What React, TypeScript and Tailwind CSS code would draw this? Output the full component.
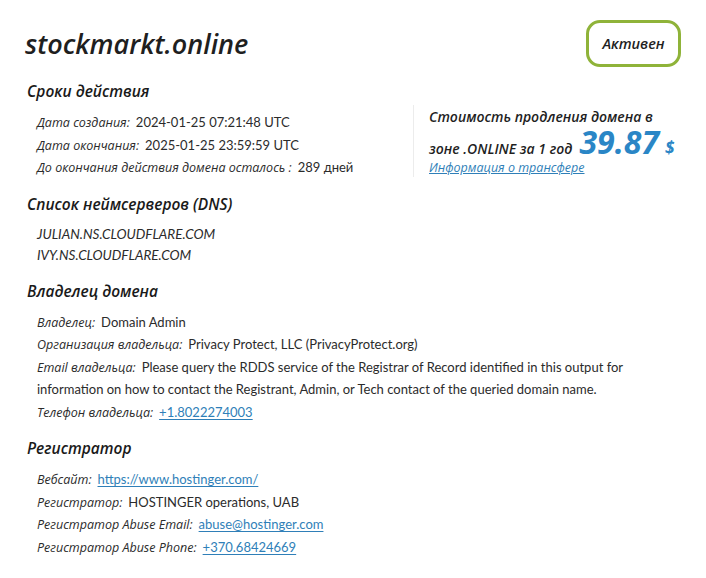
import { ReactNode } from 'react'

const head = "font-['Open_Sans','Liberation_Sans',sans-serif] italic"
const body = "font-['Lato','Liberation_Sans',sans-serif]"

function Row({ label, children }: { label: string; children: ReactNode }) {
  return (
    <div className="text-[13px] leading-[22.5px] text-[#2b2b2b]">
      <span className={`${head} text-[12.5px] leading-[14px]`}>{label}:</span>
      <span className={`${body} ml-[6px] leading-[14px]`}>{children}</span>
    </div>
  )
}

function Section({ title, children }: { title: string; children: ReactNode }) {
  return (
    <section className="mt-[13px]">
      <h2 className={`${head} text-[15.5px] font-semibold leading-[24px] text-[#1a1a1a]`}>{title}</h2>
      <div className="mt-[8px] pl-[10px]">{children}</div>
    </section>
  )
}

function Link({ children }: { children: ReactNode }) {
  return <a className="text-[#2f7fb8] underline underline-offset-2">{children}</a>
}

export default function App() {
  return (
    <div className="h-[578px] w-[706px] bg-white pl-[27px] pr-[25px] pt-[20px]">
      <header className="flex items-center justify-between">
        <h1 className={`${head} -ml-[2px] text-[27px] font-semibold leading-[32px] text-[#1f1f1f]`}>stockmarkt.online</h1>
        <span
          className={`${head} flex h-[47px] w-[95px] items-center justify-center rounded-[14px] border-[3px] border-[#8fb339] text-[14.5px] font-semibold text-[#1f1f1f]`}
        >
          Активен
        </span>
      </header>

      <div className="-mt-[1px] flex">
        <div className="flex-1">
          <Section title="Сроки действия">
            <Row label="Дата создания">2024-01-25 07:21:48 UTC</Row>
            <Row label="Дата окончания">2025-01-25 23:59:59 UTC</Row>
            <Row label="До окончания действия домена осталось ">289 дней</Row>
          </Section>
        </div>
        <div className="mt-[39px] h-[72px] w-[268px] border-l border-[#ececec] pl-[15px]">
          <p className={`${head} text-[14px] font-semibold leading-[24px] text-[#1f1f1f]`}>Стоимость продления домена в</p>
          <p className={`${head} -mt-[2px] flex items-baseline text-[14px] font-semibold leading-[30px] text-[#1f1f1f]`}>
            зоне .ONLINE за 1 год
            <span className="ml-[7px] text-[32px] font-bold leading-[30px] text-[#2a86c6]">39.87</span>
            <span className="ml-[6px] text-[17px] font-bold text-[#2a86c6]">$</span>
          </p>
          <a className={`${head} -mt-[6px] block text-[12.5px] leading-[20px] text-[#2f7fb8] underline`}>
            Информация о трансфере
          </a>
        </div>
      </div>

      <Section title="Список неймсерверов (DNS)">
        <div className={`${body} text-[13.5px] italic leading-[21px] text-[#2b2b2b]`}>
          <div>JULIAN.NS.CLOUDFLARE.COM</div>
          <div>IVY.NS.CLOUDFLARE.COM</div>
        </div>
      </Section>

      <Section title="Владелец домена">
        <Row label="Владелец">Domain Admin</Row>
        <Row label="Организация владельца">Privacy Protect, LLC (PrivacyProtect.org)</Row>
        <div className="max-w-[620px]">
          <Row label="Email владельца">
            Please query the RDDS service of the Registrar of Record identified in this output for information on how
            to contact the Registrant, Admin, or Tech contact of the queried domain name.
          </Row>
        </div>
        <Row label="Телефон владельца">
          <Link>+1.8022274003</Link>
        </Row>
      </Section>

      <Section title="Регистратор">
        <Row label="Вебсайт">
          <Link>https://www.hostinger.com/</Link>
        </Row>
        <Row label="Регистратор">HOSTINGER operations, UAB</Row>
        <Row label="Регистратор Abuse Email">
          <Link>abuse@hostinger.com</Link>
        </Row>
        <Row label="Регистратор Abuse Phone">
          <Link>+370.68424669</Link>
        </Row>
      </Section>
    </div>
  )
}
